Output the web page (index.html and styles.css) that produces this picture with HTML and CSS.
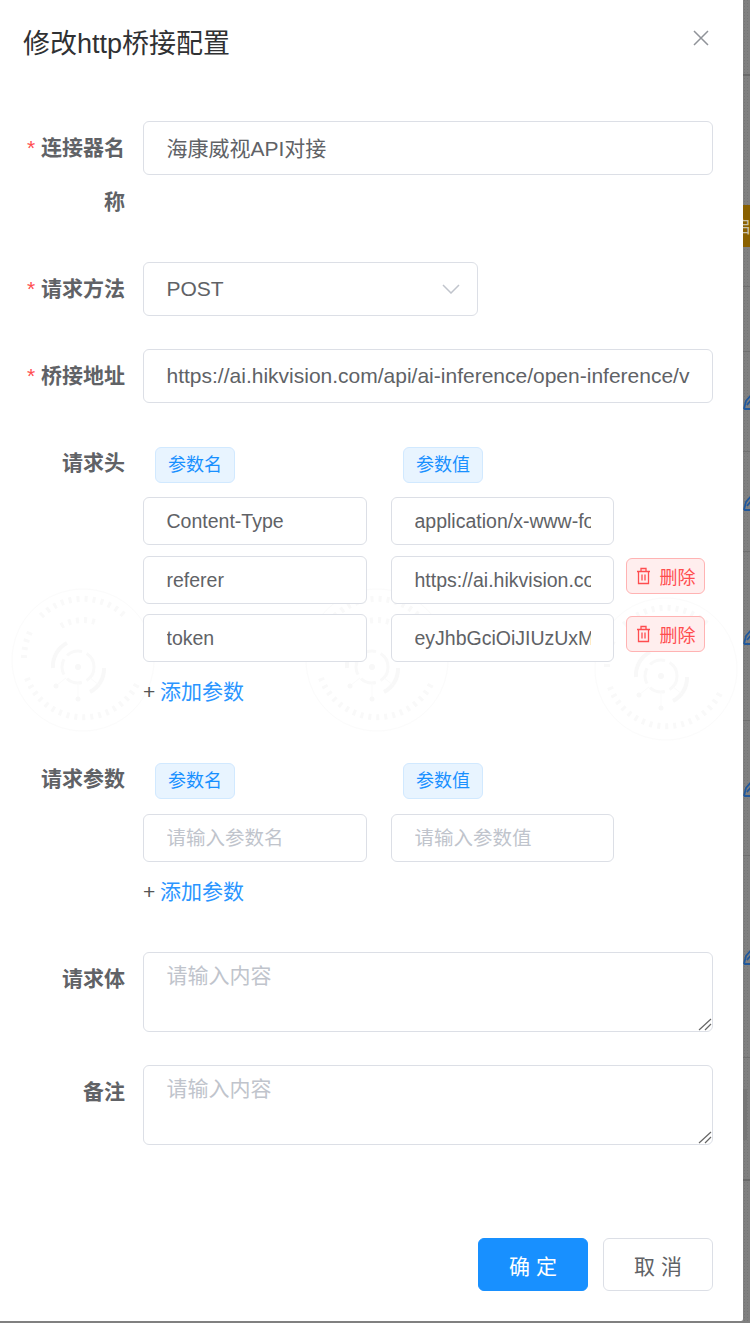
FILE: index.html
```html
<!DOCTYPE html>
<html lang="zh-CN">
<head>
<meta charset="utf-8">
<title>修改http桥接配置</title>
<link rel="stylesheet" href="styles.css">
</head>
<body>
<svg class="backdrop" width="750" height="1323" viewBox="0 0 750 1323">
  <defs>
    <pattern id="dither" width="3" height="3" patternUnits="userSpaceOnUse">
      <rect class="bd-fill" width="3" height="3"/>
      <rect class="bd-dot" width="1" height="1"/>
    </pattern>
  </defs>
  <rect fill="url(#dither)" x="0" y="0" width="750" height="1323"/>
  <rect class="bd-line-strong" x="743" y="74" width="7" height="2"/>
  <rect class="bd-line" x="743" y="286" width="7" height="1"/>
  <rect class="bd-line" x="743" y="351" width="7" height="1"/>
  <rect class="bd-line" x="743" y="451" width="7" height="1"/>
  <rect class="bd-line" x="743" y="551" width="7" height="1"/>
  <rect class="bd-line" x="743" y="720" width="7" height="1"/>
  <rect class="bd-line" x="743" y="855" width="7" height="1"/>
  <rect class="bd-line" x="743" y="1057" width="7" height="1"/>
  <rect class="bd-line-strong" x="743" y="1179" width="7" height="2"/>
  <rect class="bd-thumb" x="743" y="1089" width="4" height="51"/>
  <rect class="bd-tag" x="743" y="205" width="7" height="42"/>
  <text class="bd-tag-text" x="733" y="233">启用</text>
  <path class="bd-icon" d="M744 409l2-8 6-7M744 409h8M747 405l5-6"/>
  <path class="bd-icon" d="M744 510l2-8 6-7M744 510h8M747 506l5-6"/>
  <path class="bd-icon" d="M744 644l2-8 6-7M744 644h8M747 640l5-6"/>
  <path class="bd-icon" d="M744 796l2-8 6-7M744 796h8M747 792l5-6"/>
  <path class="bd-icon" d="M744 964l2-8 6-7M744 964h8M747 960l5-6"/>
</svg>

<div class="dialog">
  <svg class="watermark" width="743" height="160" viewBox="0 0 743 160">
    <defs>
      <g id="seal">
        <circle cx="72" cy="72" r="71"/>
        <path class="seal-ring" d="M30 28a60 60 0 0 1 84 0M16 90a60 60 0 0 0 110 6M13 70a60 60 0 0 1 6-26"/>
        <path class="seal-ring" d="M50 38a42 42 0 0 1 34-4"/>
        <path class="seal-wheel" d="M42 80a26 26 0 0 1 14-25M93 80a26 26 0 0 1-14 24"/>
        <circle cx="67" cy="79" r="16" class="seal-inner"/>
        <circle cx="67" cy="79" r="3" class="seal-dot"/>
        <path d="M67 95v14M55 90l-9 7M79 90l9 7"/>
        <circle cx="67" cy="111" r="2.500" class="seal-dot"/>
        <circle cx="45" cy="98" r="2.500" class="seal-dot"/>
      </g>
    </defs>
    <use href="#seal" x="11" y="0"/>
    <use href="#seal" x="305" y="0"/>
    <use href="#seal" x="594" y="9"/>
  </svg>

  <header class="dialog-header">
    <h2 class="dialog-title">修改http桥接配置</h2>
    <svg class="close-icon" width="16" height="16" viewBox="0 0 16 16"><path d="M1 1l14 14M15 1L1 15"/></svg>
  </header>

  <form class="form">
    <div class="form-row">
      <label class="form-label"><span class="req">*</span> 连接器名称</label>
      <div class="form-body"><input class="input input-lg input-cjk" type="text" value="海康威视API对接"></div>
    </div>

    <div class="form-row">
      <label class="form-label"><span class="req">*</span> 请求方法</label>
      <div class="form-body">
        <div class="select">
          <span>POST</span>
          <svg class="chevron" width="18" height="10" viewBox="0 0 18 10"><path d="M1 1l8 8 8-8"/></svg>
        </div>
      </div>
    </div>

    <div class="form-row">
      <label class="form-label"><span class="req">*</span> 桥接地址</label>
      <div class="form-body"><input class="input input-lg" type="text" value="https://ai.hikvision.com/api/ai-inference/open-inference/v1/chat/completions"></div>
    </div>

    <div class="form-row">
      <label class="form-label">请求头</label>
      <div class="form-body">
        <div class="param-head">
          <span class="tag">参数名</span>
          <span class="tag">参数值</span>
        </div>
        <div class="param-list">
          <div class="param-row">
            <input class="input input-md" type="text" value="Content-Type">
            <input class="input input-md" type="text" value="application/x-www-form-urlencoded">
          </div>
          <div class="param-row param-row-second">
            <input class="input input-md" type="text" value="referer">
            <input class="input input-md" type="text" value="https://ai.hikvision.com/">
            <button class="btn-delete" type="button">
              <svg class="trash" width="15" height="18" viewBox="0 0 15 18"><path d="M1 4.5h13M5 4.500V1.500h5v3M2.500 4.500v12h10v-12M6 7.500v6M9 7.500v6"/></svg>
              <span>删除</span>
            </button>
          </div>
          <div class="param-row">
            <input class="input input-md" type="text" value="token">
            <input class="input input-md" type="text" value="eyJhbGciOiJIUzUxMiJ9.eyJsdWQiOiJhZG1pbiJ9">
            <button class="btn-delete" type="button">
              <svg class="trash" width="15" height="18" viewBox="0 0 15 18"><path d="M1 4.5h13M5 4.500V1.500h5v3M2.500 4.500v12h10v-12M6 7.500v6M9 7.500v6"/></svg>
              <span>删除</span>
            </button>
          </div>
        </div>
        <div class="param-add"><span class="plus">+</span><a class="link">添加参数</a></div>
      </div>
    </div>

    <div class="form-row">
      <label class="form-label">请求参数</label>
      <div class="form-body">
        <div class="param-head param-head-loose">
          <span class="tag">参数名</span>
          <span class="tag">参数值</span>
        </div>
        <div class="param-list">
          <div class="param-row">
            <input class="input input-md" type="text" placeholder="请输入参数名">
            <input class="input input-md" type="text" placeholder="请输入参数值">
          </div>
        </div>
        <div class="param-add"><span class="plus">+</span><a class="link">添加参数</a></div>
      </div>
    </div>

    <div class="form-row">
      <label class="form-label">请求体</label>
      <div class="form-body textarea-wrap">
        <textarea class="textarea" placeholder="请输入内容"></textarea>
        <svg class="grip" width="14" height="14" viewBox="0 0 14 14"><path d="M1 13L13 2M7 13l6-6"/></svg>
      </div>
    </div>

    <div class="form-row">
      <label class="form-label">备注</label>
      <div class="form-body textarea-wrap">
        <textarea class="textarea" placeholder="请输入内容"></textarea>
        <svg class="grip" width="14" height="14" viewBox="0 0 14 14"><path d="M1 13L13 2M7 13l6-6"/></svg>
      </div>
    </div>
  </form>

  <footer class="dialog-footer">
    <button class="btn btn-primary" type="button">确 定</button>
    <button class="btn" type="button">取 消</button>
  </footer>
</div>
</body>
</html>
```
FILE: styles.css
```css
* { box-sizing: border-box; }

html, body {
  margin: 0;
  padding: 0;
  width: 750px;
  height: 1323px;
  overflow: hidden;
}

body {
  position: relative;
  font-family: "Liberation Sans", "Noto Sans CJK SC", sans-serif;
  font-size: 21px;
  color: #606266;
  background: #7f7f7f;
}

/* Dimmed page behind the drawer */
.backdrop { position: absolute; left: 0; top: 0; }
.bd-fill { fill: #808080; }
.bd-dot { fill: #757575; }
.bd-line { fill: #6f6f6f; }
.bd-line-strong { fill: #6a6a6a; }
.bd-thumb { fill: #767676; }
.bd-tag { fill: #8a6100; }
.bd-tag-text { fill: #c9c0a8; font-size: 18px; font-family: "Noto Sans CJK SC", sans-serif; }
.bd-icon { fill: none; stroke: #20589c; stroke-width: 1.8; }

/* Drawer */
.dialog {
  position: relative;
  width: 743px;
  height: 1321px;
  background: #fff;
  border-bottom-right-radius: 2px;
  display: flex;
  flex-direction: column;
  overflow: hidden;
}

.watermark {
  position: absolute;
  left: 0;
  top: 588px;
  fill: none;
  stroke: #fbfbfb;
  stroke-width: 1;
}
.seal-ring { stroke: #f9f9f9; stroke-width: 6; stroke-dasharray: 3 5; }
.seal-wheel { stroke: #f8f8f8; stroke-width: 4; }
.seal-inner { stroke: #f9f9f9; stroke-width: 3; stroke-dasharray: 16 5; }
.seal-dot { fill: #f8f8f8; stroke: none; }

.dialog-header {
  height: 121px;
  padding: 24px 34px 0 23px;
  display: flex;
  justify-content: space-between;
  align-items: flex-start;
  flex: none;
}
.dialog-title {
  margin: 0;
  font-size: 27px;
  line-height: 40px;
  font-weight: 400;
  color: #303133;
}
.close-icon {
  margin-top: 6px;
  fill: none;
  stroke: #909399;
  stroke-width: 1.5;
}

/* Form */
.form {
  position: relative;
  padding: 0 30px 0 23px;
  display: flex;
  flex-direction: column;
  gap: 33px;
}
.form-row { display: flex; align-items: flex-start; }
.form-label {
  flex: none;
  width: 120px;
  padding-right: 18px;
  text-align: right;
  font-weight: 700;
  line-height: 54px;
  color: #606266;
}
.req { color: #ff4d4f; font-weight: 400; }
.form-body { flex: 1; min-width: 0; }

.input {
  display: block;
  width: 100%;
  padding: 0 22.5px;
  border: 1px solid #dcdfe6;
  border-radius: 6px;
  background: #fff;
  color: #606266;
  font: inherit;
  outline: none;
}
.input-lg { height: 54px; }
.input-cjk { padding-bottom: 3px; }
.input-md { height: 48px; font-size: 19.5px; }
.input::placeholder, .textarea::placeholder { color: #c0c4cc; opacity: 1; }

.select {
  width: 335px;
  height: 54px;
  padding: 0 17px 0 22.5px;
  border: 1px solid #dcdfe6;
  border-radius: 6px;
  background: #fff;
  display: flex;
  align-items: center;
  justify-content: space-between;
}
.chevron { fill: none; stroke: #c0c4cc; stroke-width: 1.5; }

/* Key/value lists */
.param-head {
  display: grid;
  grid-template-columns: 224px 223px;
  column-gap: 24px;
  padding: 11px 0 14px;
}
.param-head-loose { padding-bottom: 15px; }
.tag {
  justify-self: start;
  margin-left: 12px;
  width: 80px;
  height: 36px;
  border: 1px solid #d1e9ff;
  border-radius: 6px;
  background: #e8f4ff;
  color: #1890ff;
  font-size: 18px;
  line-height: 34px;
  text-align: center;
}
.param-list { display: flex; flex-direction: column; gap: 10px; }
.param-row {
  display: grid;
  grid-template-columns: 224px 223px auto;
  column-gap: 24px;
  align-items: start;
}
.param-row-second { margin-top: 1px; }
.btn-delete {
  justify-self: start;
  margin: 2px 0 0 -12px;
  width: 79px;
  height: 36px;
  padding: 0;
  border: 1px solid #ffb3b3;
  border-radius: 6px;
  background: #ffeeee;
  color: #ff4d4f;
  font: inherit;
  font-size: 18px;
  display: flex;
  align-items: center;
  justify-content: center;
  gap: 9px;
}
.trash { fill: none; stroke: #ff4d4f; stroke-width: 1.3; }
.param-add { margin-top: 3px; line-height: 54px; display: flex; }
.plus { width: 17px; color: #555; }
.link { color: #2a95ff; }

.textarea-wrap { position: relative; }
.textarea {
  display: block;
  width: 100%;
  height: 80px;
  padding: 6.5px 22.5px;
  border: 1px solid #dcdfe6;
  border-radius: 6px;
  background: #fff;
  color: #606266;
  font: inherit;
  line-height: 31.5px;
  outline: none;
  resize: none;
}
.grip {
  position: absolute;
  right: 1px;
  bottom: 1px;
  fill: none;
  stroke: #666;
  stroke-width: 1.2;
}

/* Footer */
.dialog-footer {
  margin-top: auto;
  padding: 0 30px 30px 0;
  display: flex;
  justify-content: flex-end;
  gap: 15px;
}
.btn {
  width: 110px;
  height: 53px;
  padding: 0;
  border: 1px solid #dcdfe6;
  border-radius: 6px;
  background: #fff;
  color: #606266;
  font: inherit;
}
.btn-primary {
  border-color: #1890ff;
  background: #1890ff;
  color: #fff;
}
```
